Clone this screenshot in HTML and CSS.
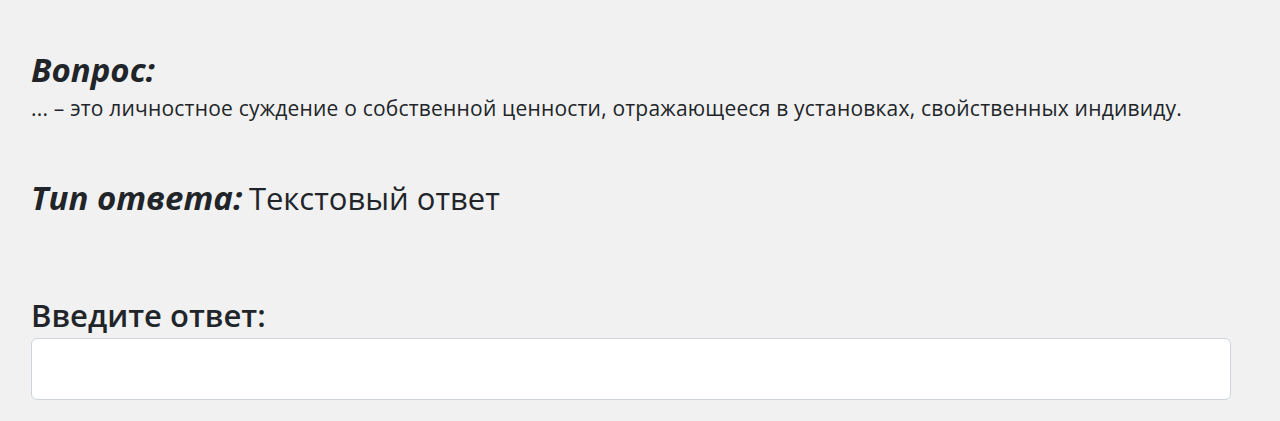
FILE: index.html
```html
<!DOCTYPE html>
<html lang="ru">
<head>
  <meta charset="UTF-8">
  <title>Вопрос</title>
  <link rel="stylesheet" href="styles.css">
</head>
<body>
  <div class="question-page">
    <div class="question-block">
      <h3 class="question-title">Вопрос:</h3>
      <p class="question-text">... – это личностное суждение о собственной ценности, отражающееся в установках, свойственных индивиду.</p>
    </div>
    <div class="answer-type">
      <span class="answer-type-label">Тип ответа:</span>
      <span class="answer-type-value">Текстовый ответ</span>
    </div>
    <div class="answer-block">
      <label class="answer-label" for="answer">Введите ответ:</label>
      <input class="answer-input" type="text" id="answer">
    </div>
  </div>
</body>
</html>
```

FILE: styles.css
```css
body {
  margin: 0;
  background-color: #f1f1f1;
  font-family: "Open Sans", Arial, sans-serif;
  color: #212529;
}

.question-page {
  padding: 50px 50px 0 31px;
}

.question-title {
  margin: 0 0 3px;
  font-size: 33px;
  font-style: italic;
  font-weight: 700;
  line-height: 1.2;
}

.question-text {
  margin: 0;
  font-size: 21px;
  letter-spacing: 0.2px;
  line-height: 1.5;
}

.answer-type {
  margin-top: 54px;
  font-size: 33px;
  line-height: 1.2;
}

.answer-type-label {
  font-style: italic;
  font-weight: 700;
}

.answer-type-value {
  margin-left: -2px;
  font-size: 31px;
  font-weight: 400;
}

.answer-block {
  margin-top: 79px;
}

.answer-label {
  display: block;
  font-size: 31px;
  font-weight: 600;
  line-height: 1.2;
}

.answer-input {
  display: block;
  box-sizing: border-box;
  width: 1200px;
  height: 62px;
  margin: 4px 0 0;
  padding: 6px 12px;
  border: 1px solid #ced4da;
  border-radius: 6px;
  background-color: #fff;
  font-family: inherit;
  font-size: 16px;
}
```
